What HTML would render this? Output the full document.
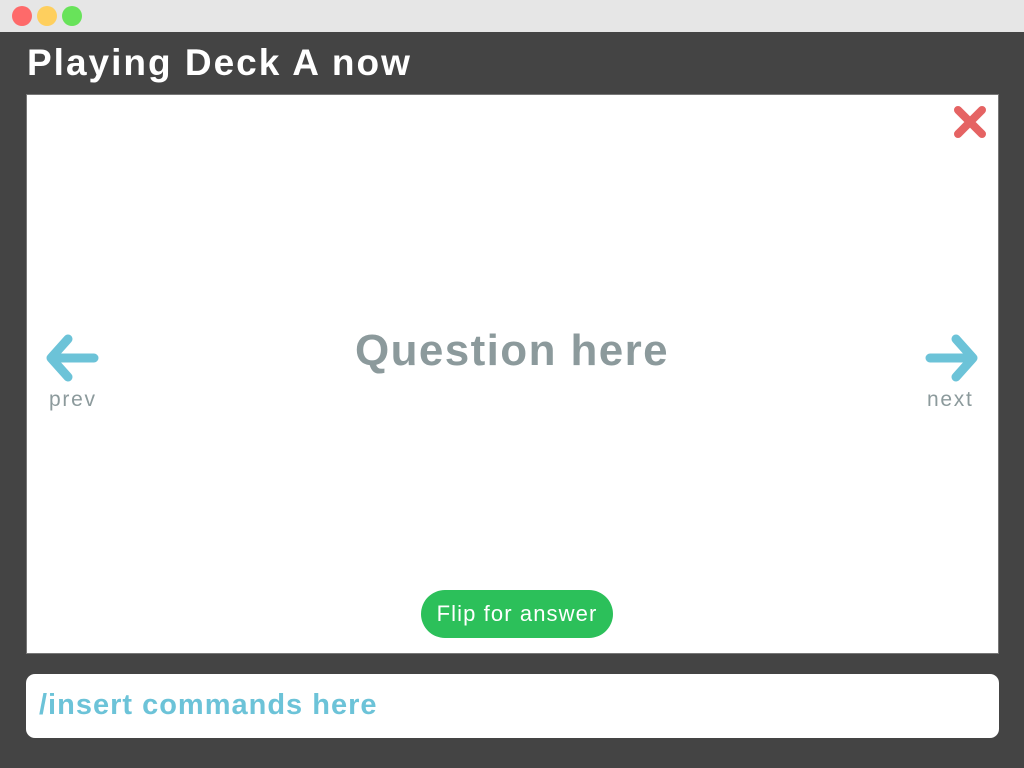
<!DOCTYPE html>
<html><head><meta charset="utf-8"><style>
*{margin:0;padding:0;box-sizing:border-box}
body{width:1024px;height:768px;background:#444;font-family:"Liberation Sans",sans-serif;position:relative;overflow:hidden}
.bar{position:absolute;left:0;top:0;width:1024px;height:32px;background:#e6e6e6}
.dot{position:absolute;top:6px;width:20px;height:20px;border-radius:50%}
h1{position:absolute;left:27px;top:42px;color:#fff;font-size:37px;font-weight:bold;letter-spacing:2px;white-space:nowrap}
.card{position:absolute;left:26px;top:94px;width:973px;height:560px;background:#fff;border:1px solid #777}
.q{position:absolute;left:0;width:100%;top:326px;text-align:center;font-size:44px;font-weight:bold;color:#8c9a9c;letter-spacing:1.4px}
.lbl{position:absolute;top:388px;font-size:21px;color:#8c9a9c;letter-spacing:1.7px}
.btn{position:absolute;left:421px;top:590px;width:192px;height:48px;border-radius:24px;background:#2cc05a;color:#fff;font-size:22px;text-align:center;line-height:48px;letter-spacing:1.1px}
.inp{position:absolute;left:26px;top:674px;width:973px;height:64px;border-radius:9px;background:#fff}
.inp span{position:absolute;left:13px;top:15px;font-size:29px;font-weight:bold;color:#6cc3d8;letter-spacing:1px}
svg{position:absolute}
</style></head><body>
<div class="bar"></div>
<div class="dot" style="left:12px;background:#fe6a6a"></div>
<div class="dot" style="left:37px;background:#fecf5e"></div>
<div class="dot" style="left:62px;background:#68e35a"></div>
<h1>Playing Deck A now</h1>
<div class="card"></div>
<svg style="left:950px;top:103px" width="40" height="38" viewBox="0 0 40 38"><path d="M8 7L32 31M32 7L8 31" stroke="#e56363" stroke-width="8" stroke-linecap="round"/></svg>
<svg style="left:40px;top:328px" width="64" height="62" viewBox="0 0 64 62"><path d="M54 30H11M28 11L11 30L28 49" stroke="#6cc3d8" stroke-width="9" fill="none" stroke-linecap="round" stroke-linejoin="round"/></svg>
<svg style="left:920px;top:328px" width="64" height="62" viewBox="0 0 64 62"><path d="M10 30H53M36 11L53 30L36 49" stroke="#6cc3d8" stroke-width="9" fill="none" stroke-linecap="round" stroke-linejoin="round"/></svg>
<div class="q">Question here</div>
<div class="lbl" style="left:49px">prev</div>
<div class="lbl" style="left:927px">next</div>
<div class="btn">Flip for answer</div>
<div class="inp"><span>/insert commands here</span></div>
</body></html>
